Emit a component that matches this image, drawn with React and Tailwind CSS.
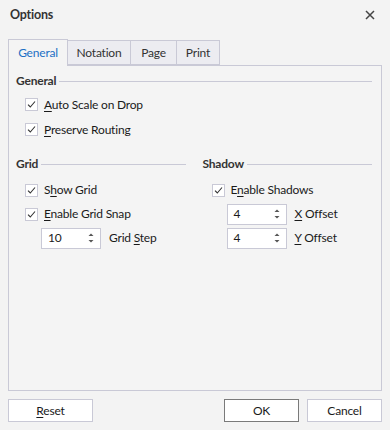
import React from "react";

const font = { fontFamily: 'Lato, "Noto Sans", sans-serif', letterSpacing: "-0.2px" };

function Mn({ children }) {
  return <span className="underline underline-offset-2 decoration-[1px]">{children}</span>;
}

function CheckRow({ children, h = "h-[24px]" }) {
  return (
    <div className={`${h} flex items-center pl-[9px] gap-[6px]`}>
      <div className="w-[13px] h-[13px] bg-white border border-[#c9c9d6] flex items-center justify-center">
        <svg width="9" height="9" viewBox="0 0 9 9">
          <path d="M1 4.6 L3.3 7 L8 1.5" fill="none" stroke="#333" strokeWidth="1.1" />
        </svg>
      </div>
      <span className="text-[12px] text-[#1a1a1a]">{children}</span>
    </div>
  );
}

function Header({ children }) {
  return (
    <div className="h-[20px] flex items-center gap-[3px]">
      <span className="text-[12px] font-bold text-[#333]">{children}</span>
      <div className="flex-1 h-px bg-[#c9c9d6]" />
    </div>
  );
}

function SpinRow({ value, indent, children }) {
  return (
    <div className={`h-[24px] flex items-center gap-[8px] ${indent}`}>
      <div className="w-[60px] h-[21px] bg-white border border-[#c9c9d6] flex items-center justify-between pl-[6px] pr-[6px]">
        <span className="text-[12px] text-[#1a1a1a]">{value}</span>
        <svg width="6" height="12" viewBox="0 0 6 12">
          <path d="M0.5 4 L3 1.5 L5.5 4 Z" fill="#555" />
          <path d="M0.5 8 L3 10.5 L5.5 8 Z" fill="#555" />
        </svg>
      </div>
      <span className="text-[12px] text-[#1a1a1a]">{children}</span>
    </div>
  );
}

function Btn({ children, className = "" }) {
  return (
    <div className={`h-[23px] bg-white border flex items-center justify-center text-[12px] text-[#1a1a1a] ${className}`}>
      {children}
    </div>
  );
}

export default function App() {
  return (
    <div className="w-[390px] h-[430px] bg-[#f3f3f3] flex flex-col" style={font}>
      {/* title bar */}
      <div className="h-[30px] flex items-center justify-between pl-[10px] pr-[15px]">
        <span className="text-[12.5px] font-bold text-[#333]">Options</span>
        <svg width="10" height="10" viewBox="0 0 10 10">
          <path d="M1 1 L9 9 M9 1 L1 9" stroke="#444" strokeWidth="1.5" />
        </svg>
      </div>

      {/* tabs */}
      <div className="mt-[9px] pl-[8px] flex items-end h-[26px] relative z-10">
        <div className="w-[60px] h-[27px] -mb-px bg-[#f4f4f4] border border-b-0 border-[#c9c9d6] flex items-center justify-center text-[12px] text-[#1c6fc4]">
          General
        </div>
        <div className="w-[63px] h-[25px] bg-[#ececf1] border border-l-0 border-[#c9c9d6] flex items-center justify-center text-[12px] text-[#333]">
          Notation
        </div>
        <div className="w-[46px] h-[25px] bg-[#ececf1] border border-l-0 border-[#c9c9d6] flex items-center justify-center text-[12px] text-[#333]">
          Page
        </div>
        <div className="w-[43px] h-[25px] bg-[#ececf1] border border-l-0 border-[#c9c9d6] flex items-center justify-center text-[12px] text-[#333]">
          Print
        </div>
      </div>

      {/* panel */}
      <div className="mx-[8px] h-[326px] border border-[#c9c9d6] bg-[#f4f4f4] pl-[7px] pr-[9px] pt-[5px]">
        <Header>General</Header>
        <div className="mt-px">
          <CheckRow h="h-[25px]"><Mn>A</Mn>uto Scale on Drop</CheckRow>
          <CheckRow h="h-[25px]"><Mn>P</Mn>reserve Routing</CheckRow>
        </div>

        <div className="grid grid-cols-2 gap-x-[17px] mt-[12px]">
          <div>
            <Header>Grid</Header>
            <div className="mt-[4px]">
              <CheckRow>S<Mn>h</Mn>ow Grid</CheckRow>
              <CheckRow><Mn>E</Mn>nable Grid Snap</CheckRow>
              <SpinRow value="10" indent="pl-[25px]">Grid <Mn>S</Mn>tep</SpinRow>
            </div>
          </div>
          <div>
            <Header>Shadow</Header>
            <div className="mt-[4px]">
              <CheckRow>E<Mn>n</Mn>able Shadows</CheckRow>
              <SpinRow value="4" indent="pl-[24px]"><Mn>X</Mn> Offset</SpinRow>
              <SpinRow value="4" indent="pl-[24px]"><Mn>Y</Mn> Offset</SpinRow>
            </div>
          </div>
        </div>
      </div>

      {/* buttons */}
      <div className="mt-[8px] px-[8px] flex items-center">
        <Btn className="w-[85px] border-[#c9c9d6]"><span><Mn>R</Mn>eset</span></Btn>
        <div className="flex-1" />
        <Btn className="w-[75px] border-[#7a7a7a]">OK</Btn>
        <Btn className="w-[75px] ml-[8px] border-[#c9c9d6]">Cancel</Btn>
      </div>
    </div>
  );
}
